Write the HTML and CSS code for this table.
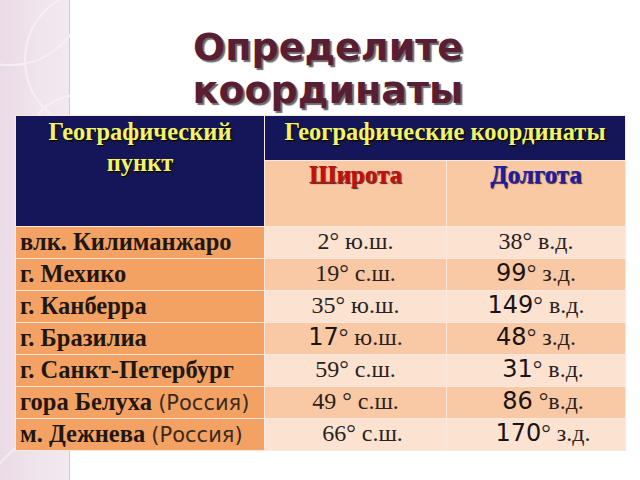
FILE: index.html
```html
<!DOCTYPE html>
<html lang="ru">
<head>
<meta charset="utf-8">
<title>Определите координаты</title>
<link rel="stylesheet" href="styles.css">
</head>
<body>
<div class="slide">
  <div class="strip">
    <svg width="70" height="480" viewBox="0 0 70 480">
      <circle cx="95" cy="60" r="70" fill="none" stroke="#f7eef4" stroke-width="2"/>
      <circle cx="10" cy="-10" r="75" fill="none" stroke="#f7eef4" stroke-width="2"/>
      <circle cx="80" cy="150" r="55" fill="none" stroke="#f7eef4" stroke-width="2"/>
      <circle cx="70" cy="520" r="90" fill="none" stroke="#f5ecf2" stroke-width="2"/>
    </svg>
  </div>
  <h1 class="title">Определите<br>координаты</h1>
  <table class="geo">
    <colgroup>
      <col class="c1"><col class="c2"><col class="c3">
    </colgroup>
    <tr class="h1">
      <th rowspan="2" class="place-head">Географический<br>пункт</th>
      <th colspan="2" class="coord-head">Географические координаты</th>
    </tr>
    <tr class="h2">
      <th class="lat-head">Широта</th>
      <th class="lon-head">Долгота</th>
    </tr>
    <tr class="light">
      <td class="place">влк. Килиманжаро</td>
      <td class="val">2° ю.ш.</td>
      <td class="val">38° в.д.</td>
    </tr>
    <tr class="dark">
      <td class="place">г. Мехико</td>
      <td class="val">19° с.ш.</td>
      <td class="val"><span class="num">99</span>° з.д.</td>
    </tr>
    <tr class="light">
      <td class="place">г. Канберра</td>
      <td class="val">35° ю.ш.</td>
      <td class="val"><span class="num">149</span>° в.д.</td>
    </tr>
    <tr class="dark">
      <td class="place">г. Бразилиа</td>
      <td class="val"><span class="num">17</span>° ю.ш.</td>
      <td class="val"><span class="num">48</span>° з.д.</td>
    </tr>
    <tr class="light">
      <td class="place">г. Санкт-Петербург</td>
      <td class="val">59° с.ш.</td>
      <td class="val shift"><span class="num">31</span>° в.д.</td>
    </tr>
    <tr class="dark">
      <td class="place">гора Белуха <span class="note">(Россия)</span></td>
      <td class="val">49 ° с.ш.</td>
      <td class="val shift"><span class="num">86</span> °в.д.</td>
    </tr>
    <tr class="light">
      <td class="place">м. Дежнева <span class="note">(Россия)</span></td>
      <td class="val shift">66° с.ш.</td>
      <td class="val shift"><span class="num">170</span>° з.д.</td>
    </tr>
  </table>
</div>
</body>
</html>
```
FILE: styles.css
```css
html, body {
  margin: 0;
  padding: 0;
  background: #ffffff;
}
.slide {
  position: relative;
  width: 640px;
  height: 480px;
  overflow: hidden;
  background: #ffffff;
}
.strip {
  position: absolute;
  left: 0;
  top: 0;
  width: 69px;
  height: 480px;
  background: linear-gradient(90deg, #eadbe6 0%, #f0e5ed 60%, #f2e8ef 100%);
  border-right: 1px solid #d6c6d0;
}
.strip svg {
  display: block;
}
.title {
  position: relative;
  margin: 0;
  padding: 26px 0 0 16px;
  text-align: center;
  font-family: "DejaVu Sans", sans-serif;
  font-weight: bold;
  font-size: 38px;
  line-height: 43px;
  color: #5a1e34;
  text-shadow: 2px 2px 1px #6a6a6a;
}
.geo {
  position: relative;
  margin: 3px 0 0 15px;
  width: 610px;
  table-layout: fixed;
  border-collapse: collapse;
  font-family: "Liberation Serif", "Times New Roman", serif;
}
.c1 { width: 249px; }
.c2 { width: 182px; }
.c3 { width: 179px; }
.geo th, .geo td {
  border: 1px solid #fbe8dd;
  padding: 0;
}
.geo th {
  font-weight: bold;
  vertical-align: top;
}
.h1 { height: 45px; }
.h2 { height: 66px; }
.place-head, .coord-head {
  background: #15165a;
  color: #f4f46a;
  font-size: 24.5px;
  line-height: 31px;
  text-shadow: 1px 1px 1px #000000, 2px 2px 1px #1c1c1c;
  border-color: #d9d0e6;
}
.place-head {
  padding-top: 0;
}
.coord-head {
  padding-top: 3px;
}
.lat-head, .lon-head {
  background: #f9c9a3;
  font-size: 25px;
  line-height: 28px;
  padding-top: 3px;
  text-shadow: 1px 1px 1px #3a2a2a;
}
.lat-head { color: #c80c0c; }
.lon-head { color: #1d1db4; }
.geo tr.light td, .geo tr.dark td {
  height: 31px;
  vertical-align: top;
}
.place {
  background: #f4a263;
  font-weight: bold;
  font-size: 24.5px;
  line-height: 29px;
  color: #1f1712;
  padding-left: 4px !important;
  white-space: nowrap;
}
.note {
  font-family: "DejaVu Sans", sans-serif;
  font-weight: normal;
  font-size: 21px;
  color: #3a2a1e;
}
.val {
  text-align: center;
  font-size: 24px;
  line-height: 29px;
  color: #2a2220;
  white-space: nowrap;
}
.light .val { background: #fce3d1; }
.dark .val { background: #f9c9a6; }
.num {
  font-family: "DejaVu Sans", sans-serif;
  font-size: 24px;
  color: #1a1412;
}
.shift {
  padding-left: 14px !important;
}
```
